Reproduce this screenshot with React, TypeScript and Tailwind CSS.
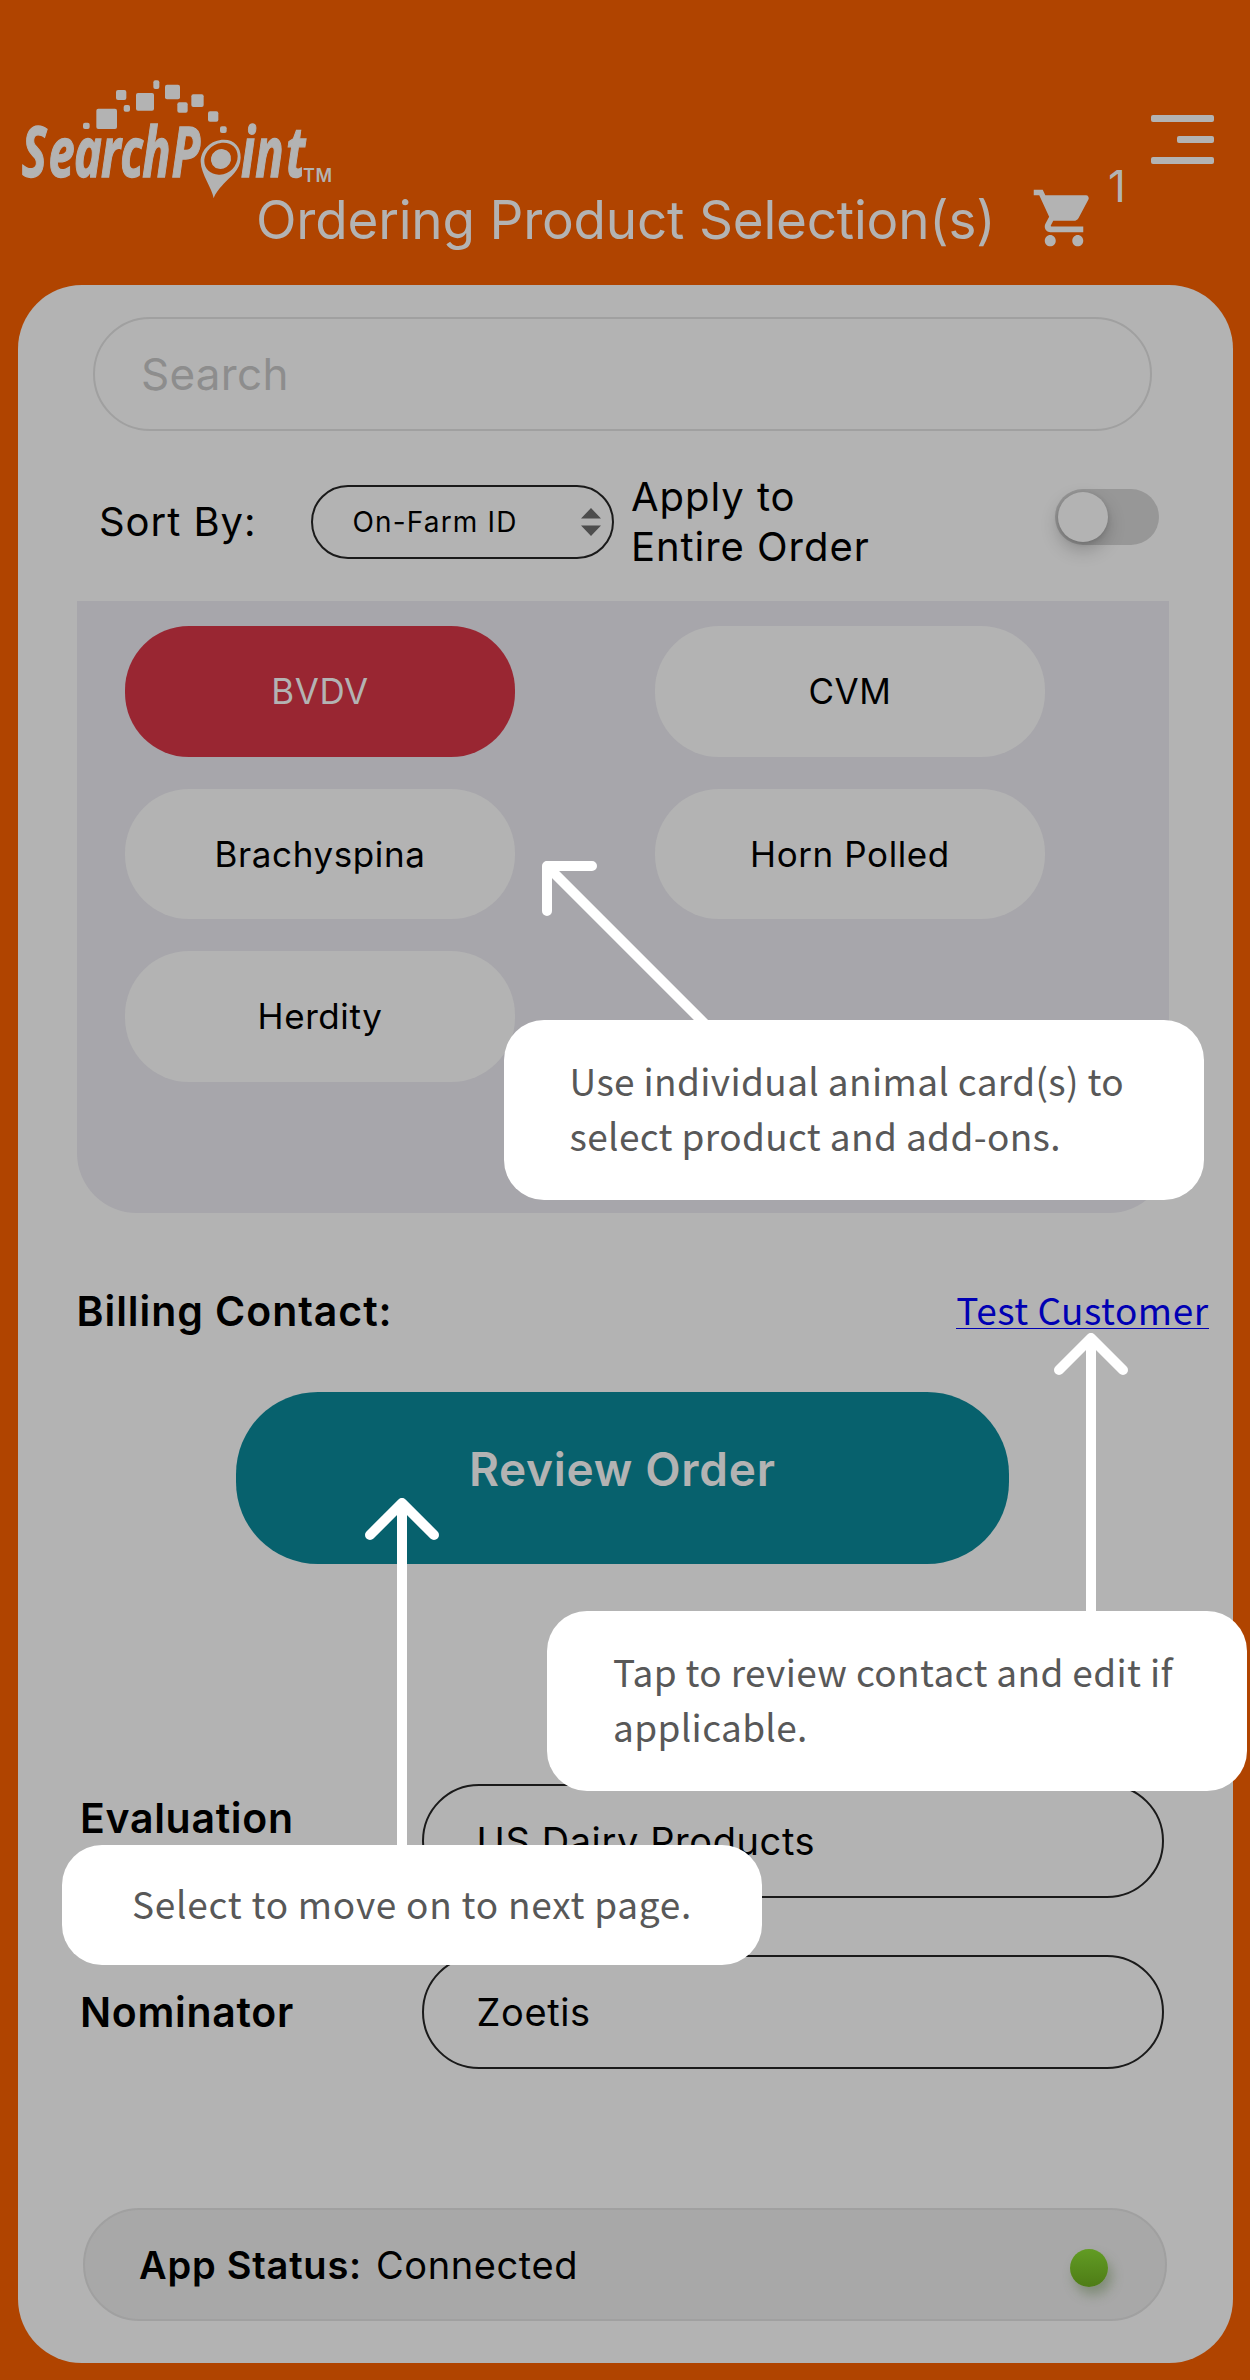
import type { ReactNode } from "react";
import { MdShoppingCart } from "react-icons/md";

const SQUARES = [
  [249, 188, 20, 19],
  [289, 146, 62, 61],
  [348, 90, 31, 30],
  [371, 135, 19, 20],
  [408, 99, 54, 53],
  [460, 61, 18, 26],
  [495, 74, 45, 44],
  [532, 127, 31, 31],
  [574, 103, 37, 38],
  [624, 154, 31, 31],
  [660, 199, 20, 20],
];

function Logo() {
  return (
    <svg
      className="ml-[20px] mt-[80px] block h-[120px] w-[316px] shrink-0 overflow-visible"
      viewBox="60 60 948 360"
      fill="#b3b3b3"
    >
      {SQUARES.map(([x, y, w, h]) => (
        <rect key={`${x}-${y}`} x={x} y={y} width={w} height={h} rx="6" />
      ))}
      <g
        stroke="#b3b3b3"
        strokeWidth="4"
        fontFamily="'Open Sans', sans-serif"
        fontStyle="italic"
        fontWeight="700"
        fontSize="207"
      >
        <text transform="translate(64 351) scale(0.68 1)" x="2 120 232 351 436 534 662">
          SearchP
        </text>
        <text transform="translate(723 351) scale(0.68 1)" x="0 63 199">
          int
        </text>
      </g>
      <path
        fillRule="evenodd"
        d="M641 415C637 385 603 342 602 305C602 268 634 239 672 239C704 239 723 262 722 293C721 332 690 350 671 371C655 389 646 400 641 415ZM656 344C688 346 713 318 713 289C713 264 696 248 671 248C640 248 613 274 613 304C613 327 632 343 656 344Z"
      />
      <ellipse cx="663" cy="297" rx="31" ry="29" transform="rotate(-35 663 297)" />
      <text x="909" y="366" fontSize="54" fontWeight="600" fontFamily="Inter, sans-serif" letterSpacing="2">
        TM
      </text>
    </svg>
  );
}

function Pill({ label, selected = false }: { label: string; selected?: boolean }) {
  return (
    <button
      className={`flex h-[130.5px] w-[390px] items-center justify-center rounded-[64px] text-[35px] tracking-[0.6px] ${
        selected ? "bg-[#992632] text-[#b3b3b3]" : "bg-[#b3b3b3] text-black"
      }`}
    >
      {label}
    </button>
  );
}

function FormRow({ label, value, labelClass = "" }: { label: string; value: string; labelClass?: string }) {
  return (
    <div className="flex h-[114px] items-center">
      <div className={`w-[341.5px] text-[41px] font-semibold tracking-[0.7px] ${labelClass}`}>{label}</div>
      <div className="flex h-full w-[742px] items-center rounded-[57px] border-2 border-[#1a1a1a] pl-[53px] text-[38px] tracking-[0.6px]">
        {value}
      </div>
    </div>
  );
}

function Tooltip({ className, children }: { className: string; children: ReactNode }) {
  return (
    <div
      className={`absolute w-[700px] rounded-[40px] bg-white font-['Noto_Sans_CJK_SC',sans-serif] text-[37px] leading-[55px] whitespace-nowrap text-[#585858] ${className}`}
    >
      {children}
    </div>
  );
}

export default function App() {
  return (
    <div className="relative h-[2380px] w-[1250px] overflow-hidden bg-[#b04400] font-['Inter',sans-serif] text-black">
      <header className="h-[285px] text-[#b3b3b3]">
        <div className="flex h-[188px] items-start justify-between">
          <Logo />
          <div className="mr-[36px] mt-[115px] flex flex-col items-end gap-[14px]">
            <span className="h-[7px] w-[63px] rounded-[2px] bg-[#b3b3b3]" />
            <span className="h-[7px] w-[37px] rounded-[2px] bg-[#b3b3b3]" />
            <span className="h-[7px] w-[63px] rounded-[2px] bg-[#b3b3b3]" />
          </div>
        </div>
        <div className="flex items-start pl-[256px]">
          <h1 className="w-[775px] text-[53px] leading-[64px] font-normal tracking-[-0.2px] whitespace-nowrap">
            Ordering Product Selection(s)
          </h1>
          <MdShoppingCart className="-mt-[4px] h-[68px] w-[66px]" preserveAspectRatio="none" />
          <span className="-mt-[24px] ml-[11px] text-[44px] leading-[44px] font-normal">1</span>
        </div>
      </header>

      <main className="ml-[18px] flex h-[2077.5px] w-[1214.5px] flex-col rounded-[64px] bg-[#b3b3b3] pt-[32px]">
        <div className="ml-[75px] flex h-[114px] w-[1058.5px] shrink-0 items-center rounded-[57px] border-2 border-[#a0a0a0] pl-[46px] text-[44px] tracking-[0.28px] text-[#8d8d8d]">
          Search
        </div>

        <div className="mt-[41px] flex h-[100px] shrink-0 items-center pr-[74px] pl-[81px]">
          <span className="w-[212px] text-[40px] tracking-[0.95px]">Sort By:</span>
          <div className="flex h-[74px] w-[303px] items-center justify-between rounded-[37px] border-2 border-[#1a1a1a] pr-[11px] pl-[39.5px] text-[28px] tracking-[1.15px]">
            On-Farm ID
            <svg className="h-[28px] w-[20px]" viewBox="0 0 20 28" fill="#4d4d4d">
              <path d="M10 0L20 10.5H0ZM0 17.5H20L10 28Z" />
            </svg>
          </div>
          <span className="ml-[17px] text-[40px] leading-[50px] tracking-[0.95px]">
            Apply to
            <br />
            Entire Order
          </span>
          <div className="mb-[10px] ml-auto flex h-[56px] w-[104px] items-center rounded-[28px] bg-[#979797] pl-[3px]">
            <span className="h-[50px] w-[50px] rounded-full bg-[#b3b3b3] shadow-[0_8px_18px_rgba(0,0,0,0.22),0_1px_5px_rgba(0,0,0,0.12)]" />
          </div>
        </div>

        <section className="mt-[28.5px] ml-[58.5px] grid h-[612px] w-[1092px] shrink-0 grid-cols-[390px_390px] content-start gap-x-[140px] gap-y-[32px] rounded-b-[60px] bg-[#a7a6ab] pt-[25.5px] pl-[48.5px]">
          <Pill label="BVDV" selected />
          <Pill label="CVM" />
          <Pill label="Brachyspina" />
          <Pill label="Horn Polled" />
          <Pill label="Herdity" />
        </section>

        <div className="mt-[69px] flex h-[60px] shrink-0 items-center justify-between pr-[24px] pl-[58.5px]">
          <span className="text-[41px] font-semibold tracking-[0.95px]">Billing Contact:</span>
          <a className="mb-[4px] border-b border-[#0000b3] font-['Noto_Sans_CJK_SC',sans-serif] text-[37px] leading-[37px] tracking-[0.5px] text-[#0000b3]">
            Test Customer
          </a>
        </div>

        <button className="mt-[50px] ml-[217.5px] flex h-[172.5px] w-[773.5px] shrink-0 items-center justify-center rounded-[82px] bg-[#07616d] pb-[17px] text-[46px] font-semibold tracking-[0.7px] text-[#b3b3b3]">
          Review Order
        </button>

        <div className="mt-[220px] ml-[62px] flex flex-col gap-[57px]">
          <FormRow label="Evaluation" value="US Dairy Products" labelClass="pb-[45px]" />
          <FormRow label="Nominator" value="Zoetis" labelClass="pt-[2px]" />
        </div>

        <div className="mt-[139px] ml-[65px] flex h-[113px] w-[1084px] shrink-0 items-center rounded-[57px] border-2 border-[#a0a0a0] bg-[#a8a8a8] pt-[1px] pr-[57px] pl-[54px] text-[38px] tracking-[0.6px]">
          <span className="font-semibold tracking-[0.77px]">App Status:</span>
          <span className="ml-[14px]">Connected</span>
          <span className="mt-[5px] ml-auto h-[38px] w-[38px] rounded-full bg-linear-to-b from-[#629c24] to-[#4e7c16] shadow-[4px_8px_12px_rgba(70,100,50,0.4)]" />
        </div>
      </main>

      <svg
        className="pointer-events-none absolute inset-0 h-[2380px] w-[1250px]"
        viewBox="0 0 1250 2380"
        fill="none"
        stroke="white"
        strokeWidth="10"
        strokeLinecap="round"
        strokeLinejoin="round"
      >
        <path d="M547 911V866H592M547 866L706 1025" />
        <path d="M1059 1370L1091 1338L1123 1370M1091 1338V1615" />
        <path d="M370 1535L402 1503L434 1535M402 1503V1850" />
      </svg>

      <Tooltip className="top-[1020px] left-[504px] h-[180px] pt-[33px] pl-[65.5px] tracking-[0.36px]">
        Use individual animal card(s) to
        <br />
        select product and add-ons.
      </Tooltip>
      <Tooltip className="top-[1611px] left-[547px] h-[180px] pt-[33px] pl-[66px] tracking-[0.35px]">
        Tap to review contact and edit if
        <br />
        applicable.
      </Tooltip>
      <Tooltip className="top-[1845px] left-[62px] h-[120px] pt-[31px] pl-[70px] tracking-[0.75px]">
        Select to move on to next page.
      </Tooltip>
    </div>
  );
}
